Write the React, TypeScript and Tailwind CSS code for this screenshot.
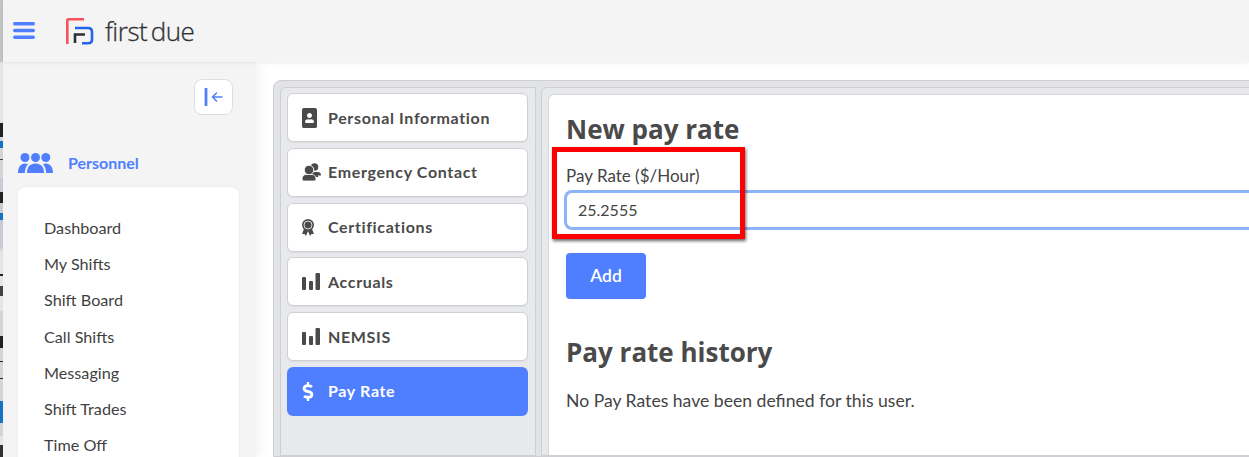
import { FaPortrait, FaDollarSign } from "react-icons/fa";

const menu = ["Dashboard", "My Shifts", "Shift Board", "Call Shifts", "Messaging", "Shift Trades", "Time Off"];

function UsersIcon() {
  return (
    <svg width="35" height="20" viewBox="0 0 35 20" fill="#4f7fff">
      <circle cx="7" cy="4.5" r="4.5" />
      <circle cx="17.5" cy="4.5" r="4.5" />
      <circle cx="27.8" cy="4.5" r="4.5" />
      <path d="M9 20C9 14 12 10.5 17.5 10.5C23 10.5 26 14 26 20Z" />
      <path d="M0 20C0 14 3 10.5 7 10.5C8 10.5 9 10.8 10 11.3C8 13.5 7 16 6.8 20Z" />
      <path d="M35 20C35 14 32 10.5 28 10.5C27 10.5 26 10.8 25 11.3C27 13.5 28 16 28.2 20Z" />
    </svg>
  );
}

function BarsIcon() {
  return (
    <svg width="18" height="17" viewBox="0 0 18 17" fill="currentColor">
      <rect x="0" y="4" width="4" height="13" rx="1" />
      <rect x="7" y="8" width="4" height="9" rx="1" />
      <rect x="13.5" y="0" width="4.5" height="17" rx="1" />
    </svg>
  );
}

function ContactIcon() {
  return (
    <svg width="19" height="18" viewBox="0 0 19 18" fill="currentColor">
      <circle cx="12.5" cy="4" r="3.8" />
      <path d="M9 9H16C18 9 19 10.5 19 12.5H12Z" />
      <path d="M10 14H16.5L14 9.5H10Z" />
      <circle cx="7" cy="7" r="4.8" stroke="#fff" strokeWidth="1" />
      <path d="M0 16C0 13 2 11.5 4 11.5H10C12 11.5 14 13 14 16C14 17.2 13 18 12 18H2C1 18 0 17.2 0 16Z" stroke="#fff" strokeWidth="0.8" />
    </svg>
  );
}

function AwardIcon() {
  return (
    <svg width="12" height="17" viewBox="0 0 12 17" fill="currentColor">
      <path d="M2 10L0 15H2.6L4 17L6 12L8 17L9.4 15H12L10 10Z" />
      <circle cx="6" cy="6" r="6" />
      <circle cx="6" cy="6" r="4" fill="none" stroke="#fff" strokeWidth="0.8" />
    </svg>
  );
}

const tabs = [
  { label: "Personal Information", icon: <FaPortrait className="w-[15px] h-[20px]" /> },
  { label: "Emergency Contact", icon: <ContactIcon /> },
  { label: "Certifications", icon: <AwardIcon /> },
  { label: "Accruals", icon: <BarsIcon /> },
  { label: "NEMSIS", icon: <BarsIcon /> },
];

function Logo() {
  return (
    <svg width="28" height="27" viewBox="0 0 28 27" fill="none">
      <path d="M1.3 26V2.5C1.3 1.7 1.7 1.3 2.5 1.3H18" stroke="#f9525a" strokeWidth="2.6" />
      <path d="M9 25V16.5H19" stroke="#2b2f36" strokeWidth="2.6" />
      <path d="M9 10H22C24.5 10 26 11.5 26 14V21.5C26 24 24.5 25.3 22 25.3H16" stroke="#2463eb" strokeWidth="2.6" />
    </svg>
  );
}

// sliver of the window behind, only 3px of it is visible
function Strip() {
  return (
    <svg width="3" height="457" className="shrink-0 block">
      <rect width="3" height="457" fill="#d4d6da" />
      <rect width="3" height="62" fill="#c4c4c4" />
      <rect y="62" width="3" height="70" fill="#e6e6e6" />
      <rect y="123" width="3" height="14" fill="#222" />
      <rect y="141" width="3" height="7" fill="#1672c4" />
      <rect y="159" width="3" height="1" fill="#444" />
      <rect y="178" width="3" height="70" fill="#c8ccd4" />
      <rect y="192" width="3" height="11" fill="#222" />
      <rect y="213" width="3" height="7" fill="#1672c4" />
      <rect y="251" width="3" height="60" fill="#e6e6e6" />
      <rect y="274" width="3" height="2" fill="#222" />
      <rect y="286" width="3" height="10" fill="#444" />
      <rect y="336" width="3" height="12" fill="#222" />
      <rect y="361" width="3" height="1" fill="#222" />
      <rect y="378" width="3" height="1" fill="#222" />
      <rect y="401" width="3" height="22" fill="#1672c4" />
      <rect y="436" width="3" height="21" fill="#e6e6e6" />
      <rect y="445" width="3" height="12" fill="#333" />
    </svg>
  );
}

export default function App() {
  return (
    <div className="flex h-[457px] w-[1249px] overflow-hidden bg-white font-['Lato',sans-serif] text-[#4a4a4a]">
      <Strip />
      <div className="flex flex-col flex-1 min-w-0">
        <header className="h-[62px] shrink-0 bg-[#f4f4f4] flex items-center z-10 shadow-[0_1px_3px_rgba(0,0,0,0.08)]">
          <svg width="22" height="17" viewBox="0 0 22 17" fill="#4f7fff" className="ml-[10px] -mt-[1px]">
            <rect width="22" height="3.6" rx="1.8" />
            <rect y="6.7" width="22" height="3.6" rx="1.8" />
            <rect y="13.4" width="22" height="3.6" rx="1.8" />
          </svg>
          <div className="ml-[31px] flex items-center">
            <Logo />
          </div>
          <span className="ml-[11px] font-['Open_Sans',sans-serif] font-light [-webkit-text-stroke:0.3px_#2f3136] text-[26px] tracking-[-0.45px] [word-spacing:-3px] text-[#2f3136] leading-none">
            first due
          </span>
        </header>
        <div className="flex flex-1 min-h-0">
          <aside className="w-[253px] shrink-0 bg-[#f4f4f4] flex flex-col shadow-[4px_0_10px_rgba(0,0,0,0.05)] z-[5]">
            <div className="flex justify-end pr-[23px] pt-[17px]">
              <button className="w-[39px] h-[36px] bg-white border border-[#dedede] rounded-[8px] flex items-center justify-center">
                <svg width="20" height="18" viewBox="0 0 20 18" fill="none" stroke="#4f7fff" strokeLinecap="round">
                  <path d="M2 1V17" strokeWidth="2.8" />
                  <path d="M18 9H9M12.5 5L8.5 9L12.5 13" strokeWidth="1.6" strokeLinejoin="round" />
                </svg>
              </button>
            </div>
            <div className="flex items-center mt-[36px] pl-[15px] h-[24px]">
              <UsersIcon />
              <span className="ml-[15px] text-[16px] font-bold text-[#4f7fff]">Personnel</span>
            </div>
            <nav className="ml-[15px] mr-[17px] mt-[12px] flex-1 bg-white rounded-t-[8px] shadow-[0_0_2px_rgba(0,0,0,0.08)] pl-[26px] pt-[23px]">
              {menu.map((item) => (
                <div key={item} className="h-[36.2px] flex items-center text-[16.2px] text-[#3f3f3f]">
                  {item}
                </div>
              ))}
            </nav>
          </aside>
          <main className="flex-1 min-w-0 pl-[17px] pt-[18px]">
            <div className="h-full w-[1100px] bg-[#e2e3e7] border border-[#cfcfd2] rounded-tl-[8px] pl-[6px] pt-[6px] flex gap-[5px]">
              <div className="w-[256px] shrink-0 h-full bg-[#e8e9ed] border border-[#cfcfd2] rounded-tl-[6px] pl-[6px] pr-[7px] pt-[5px] flex flex-col">
                {tabs.map((tab) => (
                  <button
                    key={tab.label}
                    className="h-[49px] mb-[5.8px] shrink-0 bg-white border border-[#d0d0d2] rounded-[6px] flex items-center pl-[14px] text-[16px] font-bold tracking-[0.65px] text-[#4a4a4a] shadow-[0_1px_1px_rgba(0,0,0,0.06)]"
                  >
                    <span className="w-[26px] flex justify-start shrink-0">{tab.icon}</span>
                    {tab.label}
                  </button>
                ))}
                <button className="h-[49px] shrink-0 bg-[#4f7fff] rounded-[6px] flex items-center pl-[15px] text-[16px] font-bold tracking-[0.65px] text-white">
                  <span className="w-[26px] flex shrink-0">
                    <FaDollarSign className="w-[12px] h-[19px]" />
                  </span>
                  Pay Rate
                </button>
              </div>
              <div className="flex-1 h-full bg-[#e8e9ed] border border-[#cfcfd2] rounded-tl-[6px] pl-[6px] pt-[6px]">
                <div className="relative h-full bg-white border-l border-t border-[#d8d8da] rounded-tl-[6px] pl-[17px] pt-[16px]">
                  <h2 className="font-['Open_Sans',sans-serif] font-bold text-[26px] leading-[36px] text-[#4a4a4a]">New pay rate</h2>
                  <label className="block mt-[17px] text-[17px] leading-[24px] text-[#444]">Pay Rate ($/Hour)</label>
                  <div className="mt-[2px] -ml-[2px] w-[760px] h-[40px] border-[3px] border-r-0 border-[#8db4f8] rounded-l-[8px] flex items-center pl-[11px] text-[16px] text-[#444]">
                    25.2555
                  </div>
                  <button className="mt-[23px] w-[80px] h-[46px] bg-[#4f7fff] rounded-[4px] text-white text-[17.5px] font-semibold">
                    Add
                  </button>
                  <h2 className="mt-[35px] font-['Open_Sans',sans-serif] font-bold text-[26px] leading-[36px] text-[#4a4a4a]">Pay rate history</h2>
                  <p className="mt-[19px] text-[17.6px] leading-[24px] text-[#444]">No Pay Rates have been defined for this user.</p>
                  {/* red annotation over the field */}
                  <div className="absolute left-[3px] top-[52px] w-[193px] h-[92px] border-[5px] border-[#ff0000] shadow-[1px_2px_3px_rgba(0,0,0,0.6)]" />
                </div>
              </div>
            </div>
          </main>
        </div>
      </div>
    </div>
  );
}
